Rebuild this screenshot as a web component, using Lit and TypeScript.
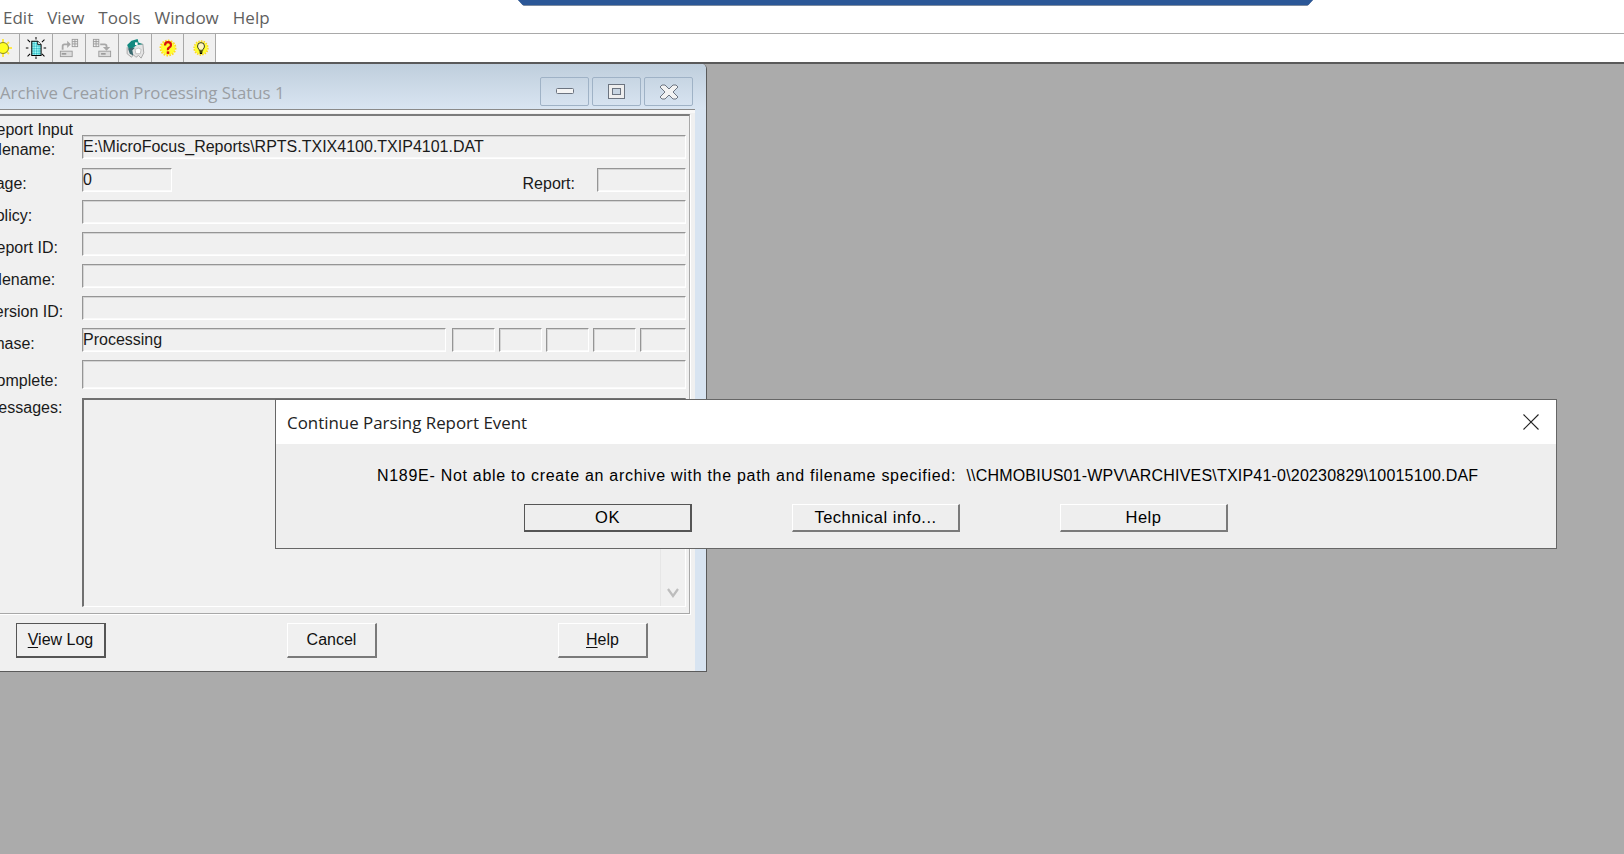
import { LitElement, html, css, svg } from "lit";
import { customElement } from "lit/decorators.js";

const sun = svg`<svg width="34" height="26" viewBox="0 0 34 26"><g stroke="#ffe94a" stroke-width="2"><path d="M17 4v18M8 13h18M11 7l12 12M23 7L11 19"/></g><circle cx="17" cy="13" r="5.500" fill="#ffff20" stroke="#8a8a20"/></svg>`;
const sparkDoc = svg`<svg width="22" height="22" viewBox="0 0 26 26"><defs><pattern id="dith" width="2" height="2" patternUnits="userSpaceOnUse"><rect width="2" height="2" fill="#5fe0e0"/><rect width="1" height="1" fill="#bfffff"/><rect x="1" y="1" width="1" height="1" fill="#30b0c0"/></pattern></defs><path d="M8 5h7l4 4v13H8z" fill="url(#dith)" stroke="#000" stroke-width="1.200"/><path d="M15 5v4h4" fill="#fff" stroke="#000"/><path d="M13 0v3M13 23v3M1 13h3M22 13h3M3 3l3 3M23 3l-3 3M3 23l3-3M23 23l-3-3" stroke="#000" stroke-width="1.200"/></svg>`;
const exportIc = svg`<svg width="20" height="20" viewBox="0 0 22 22"><path d="M3 13V9q0-3 3-3h3V3l4 4-4 4V8H6q-1 0-1 1v4z" fill="#a8a8a8"/><g fill="none" stroke="#9a9a9a"><rect x="14.500" y="1.500" width="6" height="8"/><path d="M14.500 4h6M14.500 6.500h6M17.500 1.500v8"/><rect x="1.500" y="14.500" width="13" height="6" fill="#dcdcdc"/></g><path d="M3 17.500h5" stroke="#666"/></svg>`;
const importIc = svg`<svg width="20" height="20" viewBox="0 0 22 22"><g fill="none" stroke="#9a9a9a"><rect x="1.500" y="1.500" width="6" height="8"/><path d="M1.500 4h6M1.500 6.500h6M4.500 1.500v8"/><rect x="7.500" y="14.500" width="13" height="6" fill="#dcdcdc"/></g><path d="M9 6h5q3 0 3 3v1h3l-4 4-4-4h3V9q0-1-1-1H9z" fill="#a8a8a8"/><path d="M10 17.500h5" stroke="#666"/></svg>`;
const archiveIc = svg`<svg width="20" height="21" viewBox="0 0 22 24"><path d="M6 7h14l1 10-3 6-3-3-3 2-3-3-2 3-5-4V11z" fill="#e4e4e4" stroke="#a0a0a0"/><path d="M2 8l5-5 7-2 1 4 5 2-7 1-4 3-3 6z" fill="#128a80"/><path d="M3 12l2 6 4 2-1-6 3-3-4 0z" fill="#3a6a70"/><path d="M11 5h3v3h-3z" fill="#fff"/><path d="M11 13q4-3 7 0l-1 5h-5z" fill="#fff" stroke="#bbb"/></svg>`;
const helpIc = svg`<svg width="22" height="22" viewBox="0 0 26 26"><circle cx="13" cy="13" r="8.500" fill="#ffff30"/><circle cx="13" cy="13" r="9" fill="none" stroke="#ffd820" stroke-dasharray="2 1.500" stroke-width="2"/><path d="M9.500 10q0-4 3.500-4t3.500 3.500q0 2-2 3t-1.500 3" fill="none" stroke="#d81010" stroke-width="2.600"/><rect x="11.500" y="17" width="3" height="3" fill="#d81010"/></svg>`;
const bulbIc = svg`<svg width="20" height="20" viewBox="0 0 26 26"><circle cx="13" cy="13" r="8.500" fill="#ffff30"/><circle cx="13" cy="13" r="9" fill="none" stroke="#ffd820" stroke-dasharray="2 1.500" stroke-width="2"/><path d="M10.500 15q-2-2-2-4.500a4.500 4.500 0 0 1 9 0q0 2.500-2 4.500v1h-5z" fill="#fff8c0" stroke="#000"/><path d="M11 18h4M11.500 20h3" stroke="#000" stroke-width="1.500"/></svg>`;

@customElement("app-root")
export class AppRoot extends LitElement {
  static styles = css`
    :host {
      display: flex; flex-direction: column; position: relative;
      width: 1624px; height: 854px; overflow: hidden; background: #ababab;
      font-family: "Liberation Sans", Arial, sans-serif; font-size: 16px; color: #1a1a1a;
    }
    .session-bar {
      position: absolute; left: 518px; top: 0; width: 795px; height: 6px;
      background: #7d8ca1; clip-path: polygon(0 0, 100% 0, 99.3% 100%, 0.7% 100%);
    }
    .session-bar i { display: block; height: 5px; background: #2b5797; }
    .menu {
      height: 34px; flex: none; background: #fff; border-bottom: 1px solid #a9a9a9;
      box-sizing: border-box; display: flex; align-items: flex-start; padding-left: 3px; gap: 14px;
      font: 17px/36px "Open Sans", "Noto Sans", sans-serif; color: #5f5f5f;
    }
    .toolbar { height: 28px; flex: none; background: #fff; display: flex; }
    .tools { display: flex; background: #f0f0f0; border-right: 1px solid #a8a8a8; height: 28px; }
    .tool {
      width: 32px; height: 28px; border-right: 1px solid #a8a8a8; display: flex;
      align-items: center; justify-content: center; overflow: hidden; flex: none;
    }
    .tool.first { width: 19px; justify-content: flex-end; }
    .tool.first svg { margin-right: -1px; flex: none; }
    .tool.shift { padding-left: 1px; box-sizing: border-box; }
    .tool.end { border-right: 0; width: 31px; padding-left: 3px; box-sizing: border-box; }
    .desktop { flex: 1; position: relative; border-top: 2px solid #5a5a5a; }

    .window {
      position: absolute; left: -16px; top: 0; width: 723px; height: 608px;
      box-sizing: border-box; display: flex; flex-direction: column;
      background: #d8e4f1; border: 1px solid #5a5a5a; border-top: 0; border-top-right-radius: 5px;
    }
    .titlebar {
      height: 45px; flex: none; display: flex; align-items: flex-end; justify-content: space-between;
      padding: 0 13px 3px 15px; box-sizing: border-box;
      background: linear-gradient(#bfcedc, #d9e5f2); border-top-right-radius: 5px;
    }
    .title { font: 16.800px/23px "Open Sans", "Noto Sans", sans-serif; color: #9a9ea3; white-space: nowrap; margin-bottom: 2px; }
    .controls { display: flex; gap: 3px; }
    .ctl {
      width: 49px; height: 29px; box-sizing: border-box; border: 1px solid #9fb2c6; border-radius: 2px;
      display: flex; align-items: center; justify-content: center;
    }
    .panel {
      flex: 1; background: #f0f0f0; border-top: 1px solid #8a8a8a; margin-right: 11px;
      display: flex; flex-direction: column; box-shadow: inset 0 3px 0 #f8f8f8;
    }
    .group {
      margin: 4px 5px 0 0; padding: 19px 3px 6px 0; height: 500px; box-sizing: border-box;
      border-top: 2px solid #7c7c7c; border-right: 1px solid #a8a8a8; border-bottom: 1px solid #a8a8a8;
      display: flex; flex-direction: column; gap: 8px; box-shadow: 1px 1px 0 #fff;
    }
    .row { display: flex; height: 24px; flex: none; }
    .row.tall { height: 29px; }
    .row.msgs { flex: 1; margin-top: 1px; }
    .row.gap { margin-top: 1px; }
    .label { width: 97px; flex: none; align-self: flex-end; line-height: 19px; margin-bottom: -1px; white-space: nowrap; }
    .label.two { margin-top: -19px; line-height: 20px; }
    .row.msgs .label { align-self: flex-start; }
    .field {
      flex: 1; box-sizing: border-box; height: 100%; background: #f0f0f0; padding-top: 3px;
      border-top: 1px solid #959595; border-left: 1px solid #959595;
      border-bottom: 1px solid #fff; border-right: 1px solid #fff;
      box-shadow: inset 1px 1px 0 #d4d4d4, inset 0 -1px 0 #fafafa;
      line-height: 16px; white-space: nowrap;
    }
    .field.page { flex: 0 0 90px; }
    .report { flex: 1; text-align: right; padding-right: 22px; align-self: flex-end; line-height: 19px; margin-bottom: -1px; }
    .field.rep { flex: 0 0 89px; }
    .field.phase { margin-right: 2px; }
    .field.s { flex: 0 0 43px; margin-left: 4px; }
    .field.last { flex: 0 0 46px; margin-left: 4px; }
    .msgbox {
      flex: 1; box-sizing: border-box; border-top: 2px solid #707070; border-left: 2px solid #707070;
      border-bottom: 1px solid #fff; border-right: 1px solid #fff; display: flex; justify-content: flex-end;
    }
    .scroll {
      width: 25px; border-left: 1px solid #e6e6e6; display: flex; align-items: flex-end;
      justify-content: center; padding-bottom: 8px; box-sizing: border-box;
    }
    .actions { display: flex; gap: 181px; padding: 9px 0 0 31px; }
    .btn {
      width: 90px; height: 35px; box-sizing: border-box; background: #f0f0f0;
      border: 1px solid #fff; border-right: 2px solid #7a7a7a; border-bottom: 2px solid #7a7a7a;
      display: flex; align-items: center; justify-content: center; color: #111; font-size: 16px;
    }
    .btn.def { border: 1px solid #555; border-right-width: 2px; border-bottom-width: 2px; }
    .btn u { text-underline-offset: 2px; }

    .dialog {
      position: absolute; left: 275px; top: 399px; width: 1282px; height: 150px; box-sizing: border-box;
      border: 1px solid #666; background: #eee; display: flex; flex-direction: column;
    }
    .dlg-head {
      height: 44px; flex: none; background: #fff; display: flex; align-items: center;
      justify-content: space-between; padding: 0 17px 0 11px;
      font: 16.900px "Open Sans", "Noto Sans", sans-serif; color: #222;
    }
    .dlg-msg {
      padding: 22px 0 0 101px; height: 60px; box-sizing: border-box; flex: none;
      white-space: pre; color: #000; font-size: 16px; line-height: 20px; letter-spacing: 0.200px;
    }
    .dlg-msg .words { letter-spacing: 0.710px; }
    .dlg-actions { display: flex; gap: 100px; padding-left: 248px; }
    .dbtn {
      width: 168px; height: 28px; box-sizing: border-box; background: #eee;
      border: 1px solid #fff; border-right: 2px solid #7a7a7a; border-bottom: 2px solid #7a7a7a;
      display: flex; align-items: center; justify-content: center; color: #000; font-size: 16.500px; letter-spacing: 0.500px;
    }
    .dbtn.def { border: 1px solid #555; border-right-width: 2px; border-bottom-width: 2px; }
  `;

  render() {
    return html`
      <div class="menu">
        <span>Edit</span><span>View</span><span>Tools</span><span>Window</span><span>Help</span>
      </div>
      <div class="toolbar">
        <div class="tools">
          <div class="tool first">${sun}</div>
          <div class="tool">${sparkDoc}</div>
          <div class="tool">${exportIc}</div>
          <div class="tool">${importIc}</div>
          <div class="tool">${archiveIc}</div>
          <div class="tool shift">${helpIc}</div>
          <div class="tool end">${bulbIc}</div>
        </div>
      </div>
      <div class="desktop">
        <section class="window">
          <div class="titlebar">
            <span class="title">Archive Creation Processing Status 1</span>
            <div class="controls">
              <div class="ctl"><svg width="18" height="7" viewBox="0 0 18 7"><rect x=".5" y=".5" width="17" height="5" rx="1" fill="#f4f4f4" stroke="#6c7480"/></svg></div>
              <div class="ctl"><svg width="18" height="16" viewBox="0 0 18 16"><rect x=".5" y=".5" width="16" height="14" fill="#eee" stroke="#6c7480"/><rect x="4.500" y="4.500" width="8" height="6" fill="#c8d5e2" stroke="#6c7480"/></svg></div>
              <div class="ctl"><svg width="20" height="16" viewBox="0 0 20 16"><path d="M1 3l2-2h3l4 4 4-4h3l2 2-5 5 5 5-2 2h-3l-4-4-4 4H3l-2-2 5-5z" fill="#f2f2f2" stroke="#6c7480"/></svg></div>
            </div>
          </div>
          <div class="panel">
            <div class="group">
              <div class="row">
                <div class="label two">Report Input<br />Filename:</div>
                <div class="field">E:\\MicroFocus_Reports\\RPTS.TXIX4100.TXIP4101.DAT</div>
              </div>
              <div class="row gap">
                <div class="label">Page:</div>
                <div class="field page">0</div>
                <div class="report">Report:</div>
                <div class="field rep"></div>
              </div>
              <div class="row"><div class="label">Policy:</div><div class="field"></div></div>
              <div class="row"><div class="label">Report ID:</div><div class="field"></div></div>
              <div class="row"><div class="label">Filename:</div><div class="field"></div></div>
              <div class="row"><div class="label">Version ID:</div><div class="field"></div></div>
              <div class="row">
                <div class="label">Phase:</div>
                <div class="field phase">Processing</div>
                <div class="field s"></div><div class="field s"></div><div class="field s"></div><div class="field s"></div>
                <div class="field last"></div>
              </div>
              <div class="row tall"><div class="label">Complete:</div><div class="field"></div></div>
              <div class="row msgs">
                <div class="label">Messages:</div>
                <div class="msgbox">
                  <div class="scroll"><svg width="14" height="10" viewBox="0 0 14 10"><path d="M2 1l5 7 5-7" fill="none" stroke="#bdbdbd" stroke-width="2.200"/></svg></div>
                </div>
              </div>
            </div>
            <div class="actions">
              <div class="btn def"><span><u>V</u>iew Log</span></div>
              <div class="btn">Cancel</div>
              <div class="btn"><span><u>H</u>elp</span></div>
            </div>
          </div>
        </section>
      </div>
      <div class="session-bar"><i></i></div>
      <section class="dialog">
        <div class="dlg-head">
          <span>Continue Parsing Report Event</span>
          <svg width="16" height="16" viewBox="0 0 16 16"><path d="M.5.5l15 15M15.500.5l-15 15" stroke="#222" stroke-width="1.100" fill="none"/></svg>
        </div>
        <div class="dlg-msg"><span class="words">N189E- Not able to create an archive with the path and filename specified:  </span>\\\\CHMOBIUS01-WPV\\ARCHIVES\\TXIP41-0\\20230829\\10015100.DAF</div>
        <div class="dlg-actions">
          <div class="dbtn def">OK</div>
          <div class="dbtn">Technical info...</div>
          <div class="dbtn">Help</div>
        </div>
      </section>
    `;
  }
}
